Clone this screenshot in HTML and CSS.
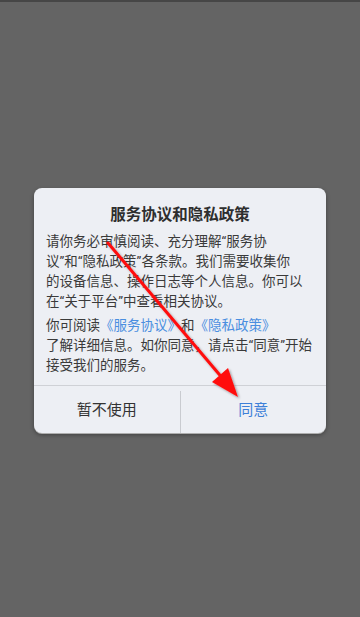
FILE: index.html
```html
<!DOCTYPE html>
<html lang="zh-CN">
<head>
<meta charset="utf-8">
<link rel="stylesheet" href="styles.css">
</head>
<body>
<div class="screen">
  <div class="topbar"></div>
  <div class="center">
    <div class="dialog">
      <div class="content">
        <div class="title">服务协议和隐私政策</div>
        <p class="para">请你务必审慎阅读、充分理解“服务协<br>议”和“隐私政策”各条款。我们需要收集你<br>的设备信息、操作日志等个人信息。你可以<br>在“关于平台”中查看相关协议。</p>
        <p class="para second">你可阅读<span class="link">《服务协议》</span>和<span class="link">《隐私政策》</span><br>了解详细信息。如你同意，请点击“同意”开始<br>接受我们的服务。</p>
      </div>
      <div class="actions">
        <div class="btn">暂不使用</div>
        <div class="vsep"></div>
        <div class="btn primary">同意</div>
      </div>
    </div>
  </div>
  <svg class="arrow" width="360" height="617" viewBox="0 0 360 617">
    <defs>
      <filter id="sh" x="-20%" y="-20%" width="140%" height="140%">
        <feDropShadow dx="1.5" dy="1.5" stdDeviation="1.2" flood-color="#000" flood-opacity="0.35"/>
      </filter>
    </defs>
    <g filter="url(#sh)">
      <line x1="108" y1="243" x2="224" y2="380" stroke="#ff1010" stroke-width="3" stroke-linecap="round"/>
      <polygon points="238,397 212,382 228,368" fill="#ff1010"/>
    </g>
  </svg>
</div>
</body>
</html>
```
FILE: styles.css
```css
html, body {
  margin: 0;
  padding: 0;
}
body {
  width: 360px;
  height: 617px;
  overflow: hidden;
  background: #646464;
  font-family: "Noto Sans CJK SC", "Noto Sans", sans-serif;
}
.screen {
  position: relative;
  width: 360px;
  height: 617px;
  display: flex;
  flex-direction: column;
}
.topbar {
  height: 2px;
  background: #464646;
}
.center {
  padding-top: 186px;
  display: flex;
  justify-content: center;
}
.dialog {
  width: 292px;
  height: 245px;
  background: #edeff4;
  border-radius: 8px;
  box-shadow: 0 1px 0 rgba(255,255,255,0.55), 0 2px 4px rgba(0,0,0,0.35);
  display: flex;
  flex-direction: column;
  overflow: hidden;
}
.content {
  padding: 14px 12px 10px 12px;
  border-bottom: 1px solid #cfd1d6;
}
.title {
  text-align: center;
  font-size: 15.5px;
  font-weight: bold;
  line-height: 22px;
  color: #2e2e2e;
  margin-bottom: 7px;
}
.para {
  margin: 0;
  font-family: "Roboto", "Noto Sans CJK SC", sans-serif;
  font-size: 13.5px;
  line-height: 20px;
  color: #3a3a3a;
  white-space: nowrap;
}
.para.second {
  margin-top: 4px;
}
.link {
  color: #4a8ee0;
}
.actions {
  flex: 1;
  display: flex;
}
.btn {
  flex: 1;
  display: flex;
  align-items: center;
  justify-content: center;
  font-size: 15px;
  color: #333;
  padding-bottom: 2px;
}
.btn.primary {
  color: #3d80d8;
}
.vsep {
  width: 1px;
  margin-top: 5px;
  background: #c9cbd0;
}
.arrow {
  position: absolute;
  left: 0;
  top: 0;
  pointer-events: none;
}
```
